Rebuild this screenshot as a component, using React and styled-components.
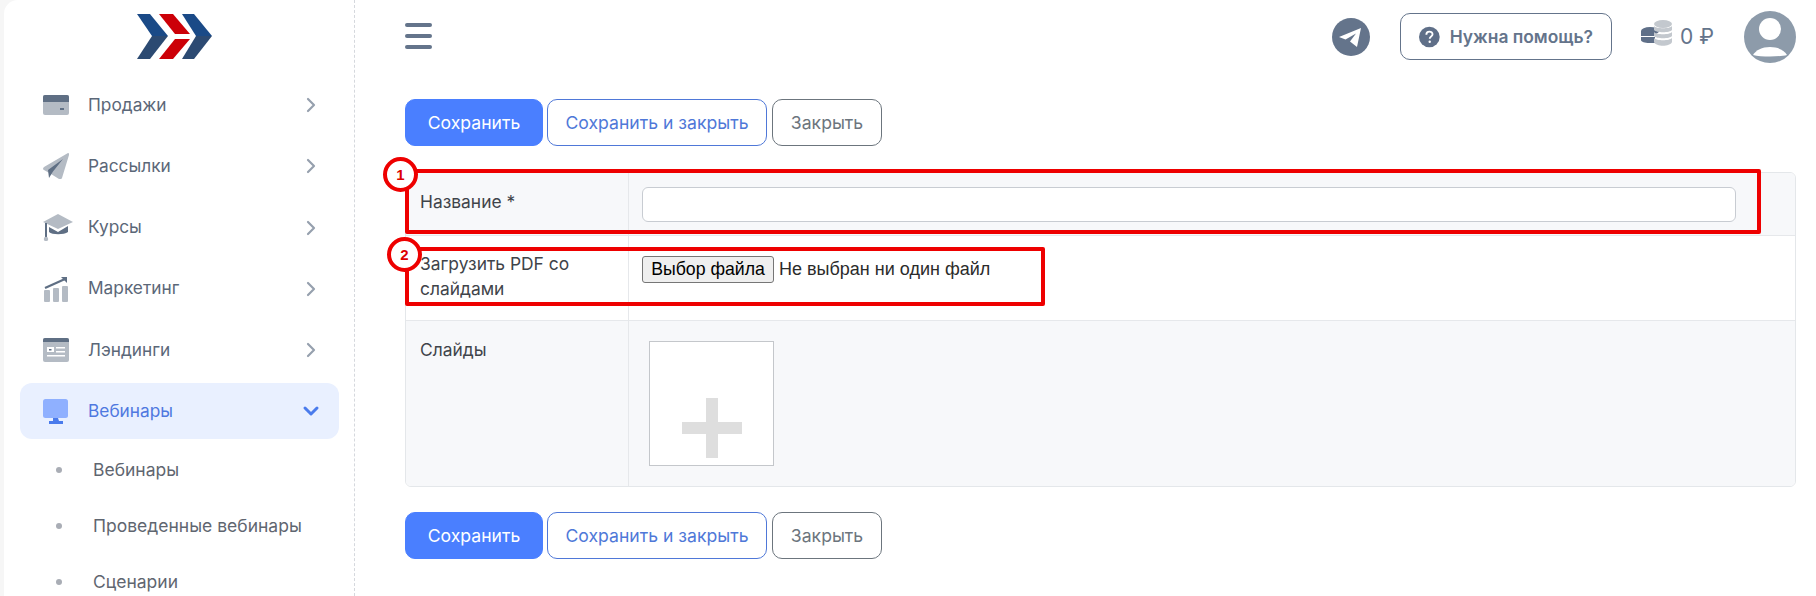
import React from 'react'
import styled, { createGlobalStyle } from 'styled-components'
import { ChevronRight, ChevronDown } from 'lucide-react'

const GlobalStyle = createGlobalStyle`
  html, body {
    margin: 0;
    height: 100%;
    overflow: hidden;
    background: #fff;
  }
  * { box-sizing: border-box; }
`

const CardIcon = () => (
  <svg width="26" height="20" viewBox="0 0 26 20">
    <rect width="26" height="20" rx="2" fill="#b4bbc4" />
    <path d="M2 0h22a2 2 0 0 1 2 2v5H0V2a2 2 0 0 1 2-2z" fill="#5f6f84" />
    <rect x="17" y="13" width="4" height="2" fill="#5f6f84" />
  </svg>
)

const PlaneIcon = () => (
  <svg width="26" height="26" viewBox="0 0 26 26">
    <path d="M25 0q1.500 0 1 2L19 25q-1 2-3 1L8 21 1 17q-2-1 0-3z" fill="#b4bbc4" />
    <path d="M5 17 20 6 10 18.500 6 25z" fill="#5f6f84" />
  </svg>
)

const CapIcon = () => (
  <svg width="30" height="27" viewBox="0 0 30 27">
    <path d="M15 0 30 8 15 15 0 8z" fill="#b4bbc4" />
    <path d="M6 13v5c3 3 15 3 19 0v-6l-10 6z" fill="#5f6f84" />
    <rect x="2" y="9" width="2" height="15" fill="#5f6f84" />
    <circle cx="3" cy="25" r="2.2" fill="#b4bbc4" />
  </svg>
)

const ChartIcon = () => (
  <svg width="26" height="26" viewBox="0 0 26 26">
    <rect x="1" y="14" width="6" height="12" rx="1" fill="#b4bbc4" />
    <rect x="10" y="12" width="6" height="14" rx="1" fill="#b4bbc4" />
    <rect x="19" y="10" width="6" height="16" rx="1" fill="#b4bbc4" />
    <path d="M2 12 22 3" stroke="#5f6f84" strokeWidth="2.2" fill="none" />
    <path d="M18 1h6v6z" fill="#5f6f84" />
  </svg>
)

const LandingIcon = () => (
  <svg width="26" height="24" viewBox="0 0 26 24">
    <rect width="26" height="24" rx="2" fill="#b4bbc4" />
    <path d="M2 0h22a2 2 0 0 1 2 2v2H0V2a2 2 0 0 1 2-2z" fill="#5f6f84" />
    <rect x="4" y="9" width="7" height="5" fill="#fff" />
    <rect x="6" y="11" width="2.500" height="1.500" fill="#5f6f84" />
    <rect x="13" y="9" width="9" height="1.500" fill="#fff" />
    <rect x="13" y="13" width="9" height="1.500" fill="#fff" />
    <rect x="4" y="17" width="18" height="1.500" fill="#fff" />
  </svg>
)

const MonitorIcon = () => (
  <svg width="26" height="25" viewBox="0 0 26 25">
    <rect width="25" height="19" rx="2.500" fill="#8fb0ff" />
    <path d="M10 19h5l1 3h4v3H6v-3h4z" fill="#4a7bec" />
  </svg>
)

const Logo = () => (
  <svg width="75" height="45" viewBox="0 0 75 45">
    <path d="M0 0h13l18 22H15z" fill="#1a4a87" />
    <path d="M15 22h16L13 45H0z" fill="#2c4a72" />
    <path d="M22 0h14l17 20H38z" fill="#cc0008" />
    <path d="M38 25h15L36 45H22z" fill="#cc0008" />
    <path d="M45 0h12l18 22H59z" fill="#1a4a87" />
    <path d="M59 22h16L57 45H45z" fill="#2c4a72" />
  </svg>
)

const TelegramBadge = () => (
  <svg width="38" height="38" viewBox="0 0 38 38">
    <circle cx="19" cy="19" r="19" fill="#64748b" />
    <path d="M7 19 29 10 25 29 18 23.500 24 15.500 13.500 21.500z" fill="#fff" />
  </svg>
)

const HelpBadge = () => (
  <svg width="22" height="22" viewBox="0 0 22 22">
    <circle cx="11" cy="11" r="11" fill="#5f6f88" />
    <path d="M7.800 8.500c0-4.200 6.600-4.200 6.600-.3 0 2.300-3 2.300-3 4.600" stroke="#fff" strokeWidth="2" fill="none" />
    <circle cx="11.400" cy="16" r="1.300" fill="#fff" />
  </svg>
)

const Coins = () => (
  <svg width="32" height="27" viewBox="0 0 32 27">
    <ellipse cx="9" cy="11" rx="9" ry="4" fill="#5f6f88" />
    <rect x="0" y="11" width="14" height="5" fill="#5f6f88" />
    <path d="M0 17h14v6H8c-4 0-8-1-8-3z" fill="#5f6f88" />
    <ellipse cx="22" cy="4" rx="9" ry="4" fill="#c3c8ce" />
    <path d="M13 6c2 3 16 3 18 0v4c-2 3-16 3-18 0z" fill="#c3c8ce" />
    <path d="M13 12c2 3 16 3 18 0v4c-2 3-16 3-18 0z" fill="#c3c8ce" />
    <path d="M13 18c2 3 16 3 18 0v4c-2 5-16 5-18 0z" fill="#c3c8ce" />
  </svg>
)

const Avatar = () => (
  <svg width="52" height="52" viewBox="0 0 52 52">
    <circle cx="26" cy="26" r="26" fill="#8d9baa" />
    <circle cx="26" cy="18" r="11" fill="#fff" />
    <path d="M9 44c3-5 9-8 17-8s14 3 17 8c-8 2-26 2-34 0z" fill="#fff" />
  </svg>
)

const menu = [
  { title: 'Продажи', Icon: CardIcon },
  { title: 'Рассылки', Icon: PlaneIcon },
  { title: 'Курсы', Icon: CapIcon },
  { title: 'Маркетинг', Icon: ChartIcon },
  { title: 'Лэндинги', Icon: LandingIcon },
  { title: 'Вебинары', Icon: MonitorIcon, active: true },
]

const subMenu = ['Вебинары', 'Проведенные вебинары', 'Сценарии']

const ButtonRow = () => (
  <Buttons>
    <PrimaryButton>Сохранить</PrimaryButton>
    <OutlineButton>Сохранить и закрыть</OutlineButton>
    <CloseButton>Закрыть</CloseButton>
  </Buttons>
)

const App = () => (
  <Page>
    <GlobalStyle />
    <Sidebar>
      <LogoBox><Logo /></LogoBox>
      <Nav>
        {menu.map(({ title, Icon, active }) => (
          <NavItem key={title} $active={active}>
            <IconSlot><Icon /></IconSlot>
            <NavTitle>{title}</NavTitle>
            {active
              ? <ChevronDown size={24} strokeWidth={3} color="#4a7bec" />
              : <ChevronRight size={24} strokeWidth={2.2} color="#96a0ae" />}
          </NavItem>
        ))}
      </Nav>
      <SubNav>
        {subMenu.map((title) => (
          <SubItem key={title}>{title}</SubItem>
        ))}
      </SubNav>
    </Sidebar>

    <Main>
      <Header>
        <Burger><i /><i /><i /></Burger>
        <HeaderRight>
          <TelegramBadge />
          <HelpButton><HelpBadge />Нужна помощь?</HelpButton>
          <Balance><Coins /><span>0 ₽</span></Balance>
          <Avatar />
        </HeaderRight>
      </Header>

      <ButtonRow />

      <FormWrap>
        <FormTable>
          <Row $shaded $height={62}>
            <Label>Название *</Label>
            <Field><TextInput type="text" /></Field>
          </Row>
          <Row $height={85}>
            <Label $tight>Загрузить PDF со слайдами</Label>
            <Field $file>
              <FileButton>Выбор файла</FileButton>
              <FileHint>Не выбран ни один файл</FileHint>
            </Field>
          </Row>
          <Row $shaded $height={166}>
            <Label>Слайды</Label>
            <Field $slides>
              <SlideBox>
                <svg width="60" height="60" viewBox="0 0 60 60">
                  <path d="M24 0h12v24h24v12H36v24H24V36H0V24h24z" fill="#dedede" />
                </svg>
              </SlideBox>
            </Field>
          </Row>
        </FormTable>
        <Callout $left={0} $top={-3} $width={1356} $height={65} />
        <Callout $left={0} $top={75} $width={640} $height={59} />
        <Marker $left={-22} $top={-15}>1</Marker>
        <Marker $left={-18} $top={65}>2</Marker>
      </FormWrap>

      <ButtonRow />
    </Main>
  </Page>
)

export default App

const Page = styled.div`
  display: flex;
  height: 596px;
  overflow: hidden;
  background: #f6f6f6;
  font-family: Inter, "Noto Sans", sans-serif;
`

const Sidebar = styled.aside`
  flex: none;
  width: 350px;
  margin-left: 4px;
  background: #fff;
  border-top-left-radius: 14px;
`

const LogoBox = styled.div`
  height: 77px;
  padding: 14px 0 0 133px;

  svg { display: block; }
`

const Nav = styled.nav`
  display: flex;
  flex-direction: column;
  gap: 5.25px;
  padding: 0 15px 0 16px;
`

const NavItem = styled.div`
  display: flex;
  align-items: center;
  height: 56px;
  padding: 0 16px 0 23px;
  border-radius: 12px;
  background: ${(p) => (p.$active ? '#e9f0ff' : 'transparent')};
  color: ${(p) => (p.$active ? '#4f78e0' : '#5b6778')};
`

const IconSlot = styled.span`
  flex: none;
  width: 45px;
  display: flex;
  align-items: center;

  svg { display: block; }
`

const NavTitle = styled.span`
  flex: 1;
  padding-bottom: 2px;
  font-size: 17.3px;
`

const SubNav = styled.div`
  display: flex;
  flex-direction: column;
  padding: 3px 16px 0 89px;
`

const SubItem = styled.div`
  position: relative;
  height: 56px;
  line-height: 56px;
  font-size: 17.5px;
  color: #5f6670;
  white-space: nowrap;

  &::before {
    content: '';
    position: absolute;
    left: -37px;
    top: 25px;
    width: 6px;
    height: 6px;
    border-radius: 50%;
    background: #a9adb5;
  }
`

const Main = styled.main`
  flex: 1;
  min-width: 0;
  background: #fff;
  border-left: 1px dashed #d5d8dd;
  padding: 0 20px 0 50px;
`

const Header = styled.header`
  display: flex;
  align-items: center;
  justify-content: space-between;
  height: 73px;
`

const Burger = styled.div`
  display: flex;
  flex-direction: column;
  gap: 7px;
  width: 27px;
  margin-bottom: 2px;

  i {
    display: block;
    height: 4px;
    border-radius: 2px;
    background: #64748b;
  }
`

const HeaderRight = styled.div`
  display: flex;
  align-items: center;
`

const HelpButton = styled.button`
  display: flex;
  align-items: center;
  gap: 10px;
  height: 47px;
  width: 212px;
  margin-left: 30px;
  padding: 0 18px;
  border: 1px solid #64748b;
  border-radius: 10px;
  background: #fff;
  color: #64748b;
  font: 600 17.4px Inter, sans-serif;
  white-space: nowrap;
`

const Balance = styled.div`
  display: flex;
  align-items: center;
  gap: 7px;
  width: 132px;
  padding-left: 29px;
  color: #64748b;
  font-size: 21px;

  svg { margin-top: -7px; }
`

const Buttons = styled.div`
  display: flex;
  margin-top: 26px;
`

const BaseButton = styled.button`
  height: 47px;
  border-radius: 10px;
  font: 400 17.6px Inter, sans-serif;
  white-space: nowrap;
  padding: 0;
  background: #fff;
`

const PrimaryButton = styled(BaseButton)`
  width: 138px;
  border: 1px solid #4a7fff;
  background: #4a7fff;
  color: #fff;
`

const OutlineButton = styled(BaseButton)`
  width: 220px;
  margin-left: 4px;
  border: 1px solid #4f78d8;
  color: #4f78d8;
`

const CloseButton = styled(BaseButton)`
  width: 110px;
  margin-left: 5px;
  border: 1px solid #6c757d;
  color: #6c757d;
`

const FormWrap = styled.div`
  position: relative;
  margin-top: 26px;

  & + ${Buttons} { margin-top: 25px; }
`

const FormTable = styled.div`
  border: 1px solid #e4e7ea;
  border-radius: 6px;
  overflow: hidden;
`

const Row = styled.div`
  display: flex;
  height: ${(p) => p.$height}px;
  background: ${(p) => (p.$shaded ? '#f7f8fa' : '#fff')};

  & + & { border-top: 1px solid #e6e8eb; }
`

const Label = styled.div`
  flex: none;
  width: 223px;
  padding: ${(p) => (p.$tight ? '15px' : '16px')} 14px 0 14px;
  border-right: 1px solid #e6e8eb;
  font-size: 17.4px;
  line-height: 25px;
  color: #3f444a;
`

const Field = styled.div`
  flex: 1;
  min-width: 0;
  display: flex;
  align-items: flex-start;
  padding: ${(p) => (p.$file ? '20px 13px' : p.$slides ? '20px 20px' : '14px 59px 0 13px')};
`

const TextInput = styled.input`
  width: 100%;
  height: 35px;
  border: 1px solid #c8ccd2;
  border-radius: 6px;
  background: #fff;
`

const FileButton = styled.button`
  height: 27px;
  width: 132px;
  padding: 0;
  border: 1px solid #767676;
  border-radius: 3px;
  background: #efefef;
  color: #000;
  font: 400 17.7px "Liberation Sans", Arial, sans-serif;
  white-space: nowrap;
`

const FileHint = styled.span`
  margin-left: 5px;
  color: #2b2b2b;
  font: 400 18px/27px "Liberation Sans", Arial, sans-serif;
  white-space: nowrap;
`

const SlideBox = styled.div`
  width: 125px;
  height: 125px;
  border: 1px solid #c4c7cb;
  background: #fff;
  padding: 56px 0 0 32px;

  svg { display: block; }
`

const Callout = styled.div`
  position: absolute;
  left: ${(p) => p.$left}px;
  top: ${(p) => p.$top}px;
  width: ${(p) => p.$width}px;
  height: ${(p) => p.$height}px;
  border: 4px solid #ee0000;
  border-radius: 2px;
  pointer-events: none;
`

const Marker = styled.div`
  position: absolute;
  left: ${(p) => p.$left}px;
  top: ${(p) => p.$top}px;
  width: 35px;
  height: 35px;
  border: 4px solid #ee0000;
  border-radius: 50%;
  background: #fff;
  color: #dd0000;
  font: 700 15px/27px "Liberation Sans", Arial, sans-serif;
  text-align: center;
`
